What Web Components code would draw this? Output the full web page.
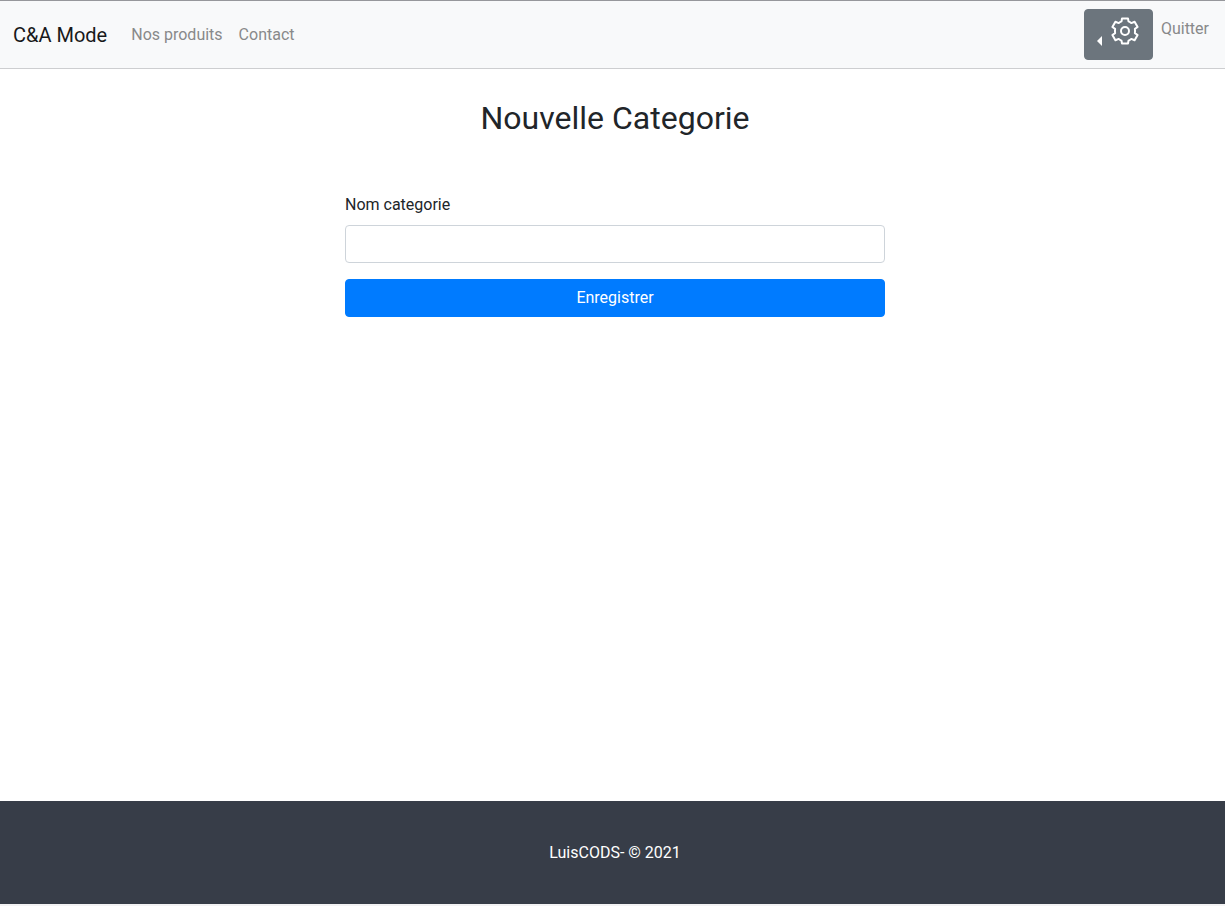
<!DOCTYPE html>
<html lang="fr">
<head>
<meta charset="utf-8">
<meta name="viewport" content="width=device-width, initial-scale=1">
<title>Nouvelle Categorie</title>
<style>
body{margin:0;font-family:Roboto,"Liberation Sans",sans-serif;font-size:16px;line-height:24px;color:#212529;background:#fff}
</style>
</head>
<body>
<shop-page>
  <shop-navbar slot="header">
    <nav-link slot="links" href="#produits">Nos produits</nav-link>
    <nav-link slot="links" href="#contact">Contact</nav-link>
    <settings-button slot="actions"></settings-button>
    <nav-link slot="actions" href="#quitter">Quitter</nav-link>
  </shop-navbar>
  <category-form>Nouvelle Categorie</category-form>
  <shop-footer slot="footer">LuisCODS- © 2021</shop-footer>
</shop-page>
<script>
const define = (name, html) => {
  const template = document.createElement('template');
  template.innerHTML = html;
  customElements.define(name, class extends HTMLElement {
    constructor() {
      super();
      this.attachShadow({ mode: 'open' }).append(template.content.cloneNode(true));
    }
    connectedCallback() {
      const link = this.shadowRoot.querySelector('a[data-link]');
      if (link) link.href = this.getAttribute('href');
    }
  });
};

define('shop-page', `
<style>
:host{display:flex;flex-direction:column;min-height:100vh;box-sizing:border-box;border-bottom:2px solid #f3f3f4}
main{flex:1}
</style>
<slot name="header"></slot>
<main><slot></slot></main>
<slot name="footer"></slot>`);

define('shop-navbar', `
<style>
:host{display:block}
nav{display:flex;align-items:center;padding:8px;background:#f8f9fa;border-top:1px solid #96979b;border-bottom:1px solid #cdced0}
.brand{margin:0 16px 0 5px;font-size:20px;line-height:30px;color:#18191a;text-decoration:none}
.links{display:flex;flex:1}
.actions{display:flex;align-items:flex-start}
</style>
<nav>
  <a class="brand" href="#accueil">C&amp;A Mode</a>
  <div class="links"><slot name="links"></slot></div>
  <div class="actions"><slot name="actions"></slot></div>
</nav>`);

define('nav-link', `
<style>
:host{display:block}
a{display:block;padding:8px;color:#88898a;text-decoration:none}
</style>
<a data-link href="#"><slot></slot></a>`);

define('settings-button', `
<style>
:host{display:block}
button{display:flex;align-items:flex-start;gap:8px;height:51px;padding:6px 12px;border:1px solid #6c757d;border-radius:4px;background:#6c757d;color:#fff;cursor:pointer}
.caret{margin-top:20px;border:solid transparent;border-width:5px 5px 5px 0;border-right-color:#fff}
svg{display:block}
</style>
<button type="button" aria-label="Paramètres" aria-haspopup="true">
  <span class="caret"></span>
  <svg width="30" height="30" viewBox="0 0 30 30" fill="none" stroke="#fff" stroke-width="2" stroke-linejoin="round">
    <path d="M12 2.5H18L18.5 5.4Q20.5 6.2 21.3 7.1L24.6 5.8 27.6 11 24.9 12.9Q25.2 15 24.9 17.1L27.6 19 24.6 24.2 21.3 22.9Q20.5 23.8 18.5 24.6L18 27.5H12L11.5 24.6Q9.5 23.8 8.7 22.9L5.4 24.2 2.4 19 5.1 17.1Q4.8 15 5.1 12.9L2.4 11 5.4 5.8 8.7 7.1Q9.5 6.2 11.5 5.4Z"/>
    <circle cx="15" cy="15" r="4"/>
  </svg>
</button>`);

define('category-form', `
<style>
:host{display:block;padding:30px 15px 24px 20px}
h2{margin:0 0 56px;font-size:32px;line-height:38px;font-weight:400;text-align:center}
form{max-width:540px;margin:0 auto}
label{display:block;margin-bottom:8px}
input{display:block;box-sizing:border-box;width:100%;height:38px;margin-bottom:16px;padding:6px 12px;border:1px solid #ced4da;border-radius:4px;background:#fff;color:#495057;font:inherit}
button{display:block;width:100%;height:38px;padding:6px 12px;border:1px solid #007bff;border-radius:4px;background:#007bff;color:#fff;font:inherit;cursor:pointer}
</style>
<h2><slot></slot></h2>
<form>
  <label for="nom">Nom categorie</label>
  <input id="nom" name="nom" type="text">
  <button type="submit">Enregistrer</button>
</form>`);

define('shop-footer', `
<style>
:host{display:block}
footer{padding:40px 0 40px 5px;line-height:23px;text-align:center;color:#fff;background:#373d48}
</style>
<footer><slot></slot></footer>`);
</script>
</body>
</html>
